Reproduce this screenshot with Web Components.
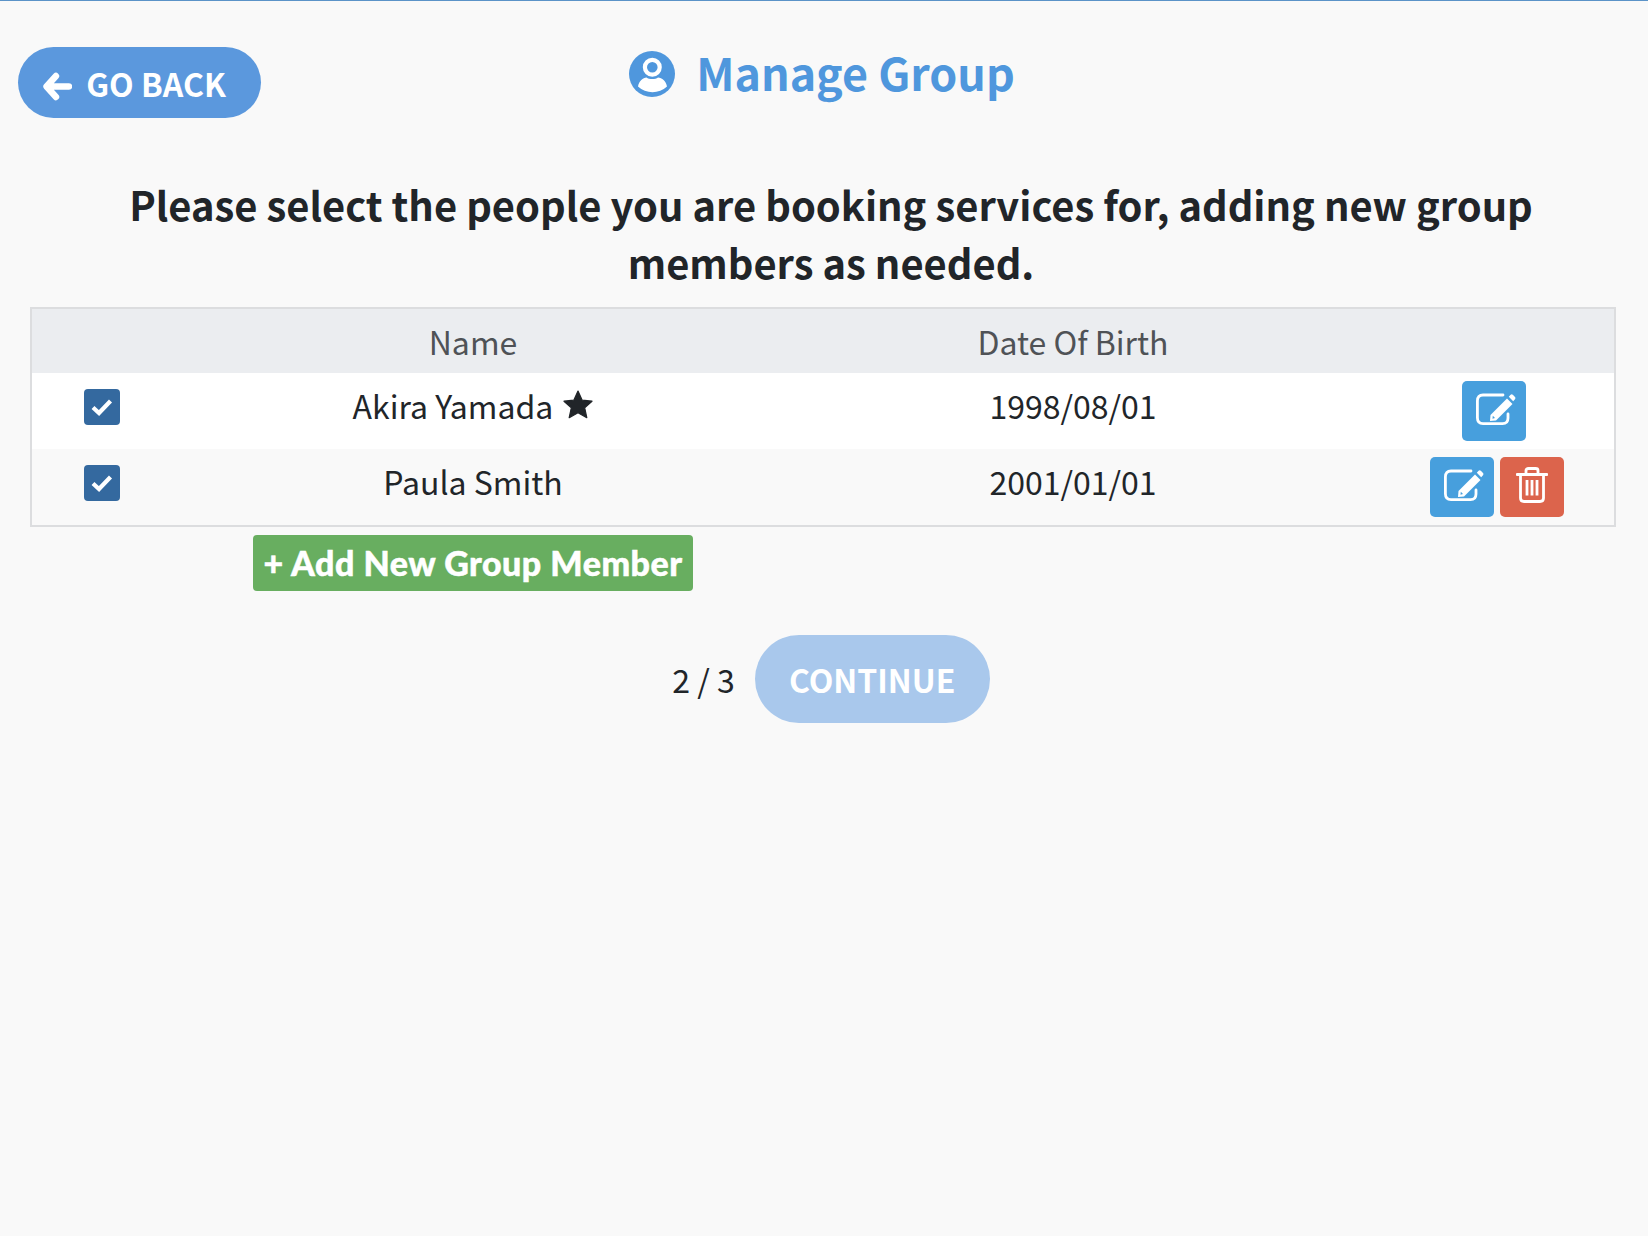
<!DOCTYPE html>
<html lang="en">
<head>
<meta charset="utf-8">
<title>Manage Group</title>
<style>
  html, body { margin: 0; padding: 0; }
  body {
    min-height: 1236px;
    box-sizing: border-box;
    background: #f9f9f9;
    border-top: 1px solid #5b93c8;
    font-family: "Noto Sans CJK JP", "Noto Sans", sans-serif;
    color: #212529;
  }
</style>
</head>
<body>
<group-page>
  <span slot="title">Manage Group</span>
  <span slot="intro">Please select the people you are booking services for, adding new group members as needed.</span>
  <member-table>
    <member-row star>
      <span slot="name">Akira Yamada</span>
      <span slot="dob">1998/08/01</span>
    </member-row>
    <member-row deletable>
      <span slot="name">Paula Smith</span>
      <span slot="dob">2001/01/01</span>
    </member-row>
  </member-table>
</group-page>

<script>
// pills are the round blue buttons (go back, continue)
class PillButton extends HTMLElement {
  constructor() {
    super();
    this.attachShadow({mode: 'open'}).innerHTML = `
      <style>
        :host {
          display: inline-flex;
          align-items: center;
          justify-content: center;
          box-sizing: border-box;
          background: var(--pill-bg, #5b98dd);
          color: #fff;
          font-weight: 700;
          cursor: pointer;
        }
      </style>
      <slot></slot>
    `;
  }
}

class IconButton extends HTMLElement {
  constructor() {
    super();
    let kind = this.getAttribute('kind');
    let icon = kind === 'delete' ? `
      <svg width="32" height="36" viewBox="0 0 32 36" fill="none" stroke="#fff" stroke-width="2.800">
        <path d="M1 7.500h30" stroke-linecap="round"/>
        <path d="M10 7V3.500Q10 1.500 12.500 1.500h7Q22 1.500 22 3.500V7"/>
        <path d="M4.500 7.500v23.500Q4.500 34.500 8 34.500h16Q27.500 34.500 27.500 31V7.500"/>
        <path d="M11 13v15.500M16 13v15.500M21 13v15.500"/>
      </svg>` : `
      <svg class="pen" width="40" height="32" viewBox="0 0 40 32">
        <path d="M27 2H7Q1.400 2 1.400 7.800V24.800Q1.400 30.600 7 30.600H26.500Q32 30.600 32 25V21" fill="none" stroke="#fff" stroke-width="2.800" stroke-linecap="round"/>
        <path fill="#fff" fill-rule="evenodd" d="M31 5.500L14.500 22L14 28L20 27.500L36.500 11ZM16.800 22.800L19 25L16.500 25.700Z"/>
        <path fill="#fff" d="M32.800 3.700L34.600 1.700Q35.700.6 36.800 1.700L39 4Q40 5.100 39 6.200L37.200 8.200Z"/>
      </svg>`;
    this.attachShadow({mode: 'open'}).innerHTML = `
      <style>
        :host {
          display: flex;
          align-items: center;
          justify-content: center;
          width: 64px;
          height: 60px;
          border-radius: 5px;
          cursor: pointer;
          background: ${kind === 'delete' ? '#dc644c' : '#479fdd'};
        }
        svg { display: block; margin-bottom: 5px; }
        .pen { margin-left: 4px; }
      </style>
      ${icon}
    `;
  }
}

class MemberRow extends HTMLElement {
  constructor() {
    super();
    let star = this.hasAttribute('star') ? `
      <svg class="star" width="30" height="29" viewBox="0 0 30 29"><path fill="#212529" stroke="#212529" stroke-width="1.200" stroke-linejoin="round" d="M15 1L19.200 10.200L29 11.200L21.700 17.800L23.800 27.700L15 22.700L6.200 27.700L8.300 17.800L1 11.200L10.800 10.200Z"/></svg>` : '';
    let del = this.hasAttribute('deletable') ? '<icon-button kind="delete"></icon-button>' : '';
    this.attachShadow({mode: 'open'}).innerHTML = `
      <style>
        :host {
          display: grid;
          grid-template-columns: var(--member-cols);
          height: 76px;
          background: #fff;
          font-size: 32px;
          line-height: 44px;
        }
        :host(:nth-of-type(even)) { background: #f9f9f9; }
        .cell { display: flex; align-items: center; justify-content: center; padding-bottom: 8px; box-sizing: border-box; }
        .text { padding-bottom: 13px; }
        .box {
          width: 36px;
          height: 36px;
          border-radius: 4px;
          background: #34699f;
          display: flex;
          align-items: center;
          justify-content: center;
        }
        .star { margin-left: 10px; margin-bottom: 0; }
        .actions { gap: 6px; padding: 0 0 0 2px; }
        .actions.two { padding-left: 8px; }
        .box svg { display: block; }
      </style>
      <div class="cell">
        <div class="box">
          <svg width="24" height="20" viewBox="0 0 24 20"><path d="M3 10.500L9 16L20.500 4" fill="none" stroke="#fff" stroke-width="4.200"/></svg>
        </div>
      </div>
      <div class="cell text"><slot name="name"></slot>${star}</div>
      <div class="cell text"><slot name="dob"></slot></div>
      <div class="cell actions ${del ? 'two' : ''}"><icon-button kind="edit"></icon-button>${del}</div>
    `;
  }
}

class MemberTable extends HTMLElement {
  constructor() {
    super();
    this.attachShadow({mode: 'open'}).innerHTML = `
      <style>
        :host {
          display: block;
          --member-cols: 140px 602px 598px 1fr;
        }
        .frame { border: 2px solid #dcdddf; }
        .head {
          display: grid;
          grid-template-columns: var(--member-cols);
          height: 64px;
          background: #ebedf0;
          color: #4f5256;
          font-size: 32px;
          line-height: 64px;
          text-align: center;
        }
        .add {
          display: grid;
          grid-template-columns: var(--member-cols);
          margin-top: 8px;
          padding-left: 2px;
        }
        button {
          grid-column: 2;
          justify-self: center;
          width: 440px;
          height: 56px;
          padding: 0;
          border: 0;
          border-radius: 4px;
          background: #68ae60;
          color: #fff;
          font-family: Lato, sans-serif;
          font-weight: 900;
          font-size: 34px;
          letter-spacing: 0.500px;
          -webkit-text-stroke: 0.500px #fff;
          line-height: 56px;
        }
      </style>
      <div class="frame">
        <div class="head">
          <span></span><span>Name</span><span>Date Of Birth</span><span></span>
        </div>
        <slot></slot>
      </div>
      <div class="add"><button>+ Add New Group Member</button></div>
    `;
  }
}

class GroupPage extends HTMLElement {
  constructor() {
    super();
    this.attachShadow({mode: 'open'}).innerHTML = `
      <style>
        :host { display: block; padding: 46px 32px 0 30px; }
        header {
          display: grid;
          grid-template-columns: 1fr auto 1fr;
          align-items: start;
          margin-left: -12px;
        }
        .back {
          justify-self: start;
          width: 243px;
          height: 71px;
          border-radius: 36px;
          gap: 14px;
          font-size: 32px;
          padding-right: 10px;
        }
        .back svg { margin-top: 8px; }
        .title {
          display: flex;
          align-items: center;
          gap: 21px;
          height: 54px;
          margin-left: 10px;
          color: #4f97dd;
          font-size: 44.800px;
          font-weight: 600;
          line-height: 54px;
        }
        .title svg, .back svg { display: block; flex: none; }
        .title-text { padding-bottom: 5px; }
        .intro {
          margin: 57px 0 0;
          padding: 0 8px 0 24px;
          text-align: center;
          font-size: 39.900px;
          font-weight: 700;
          line-height: 58px;
          color: #212529;
        }
        .steps {
          display: flex;
          align-items: center;
          justify-content: center;
          gap: 20px;
          margin: 44px 0 0 16px;
          font-size: 32px;
          color: #212529;
        }
        .next {
          width: 235px;
          height: 88px;
          border-radius: 44px;
          --pill-bg: #a9c8ec;
          font-size: 32px;
        }
        .list { margin-top: 16px; }
      </style>
      <header>
        <pill-button class="back">
          <svg width="29" height="29" viewBox="0 0 29 29"><path d="M13 4L3.500 14.500L13 25M4 14.500H26" fill="none" stroke="#fff" stroke-width="6.400" stroke-linecap="round" stroke-linejoin="round"/></svg>
          GO BACK
        </pill-button>
        <div class="title">
          <svg width="46" height="46" viewBox="0 0 46 46">
            <circle cx="23" cy="23" r="23" fill="#4f97dd"/>
            <circle cx="23.300" cy="16.300" r="7.400" fill="none" stroke="#fff" stroke-width="4.200"/>
            <path d="M9 35.500C10 30 14 26.500 17.500 26.500C20 28.500 26.500 28.500 29 26.500C33 26.500 37 30 38 35.500C30 43 17 43 9 35.500Z" fill="#fff"/>
          </svg>
          <span class="title-text"><slot name="title"></slot></span>
        </div>
        <span></span>
      </header>
      <p class="intro"><slot name="intro"></slot></p>
      <div class="list"><slot></slot></div>
      <div class="steps">
        <span>2 / 3</span>
        <pill-button class="next">CONTINUE</pill-button>
      </div>
    `;
  }
}

// children first so the rows are ready when the table upgrades
window.customElements.define('pill-button', PillButton);
window.customElements.define('icon-button', IconButton);
window.customElements.define('member-row', MemberRow);
window.customElements.define('member-table', MemberTable);
window.customElements.define('group-page', GroupPage);
</script>
</body>
</html>
